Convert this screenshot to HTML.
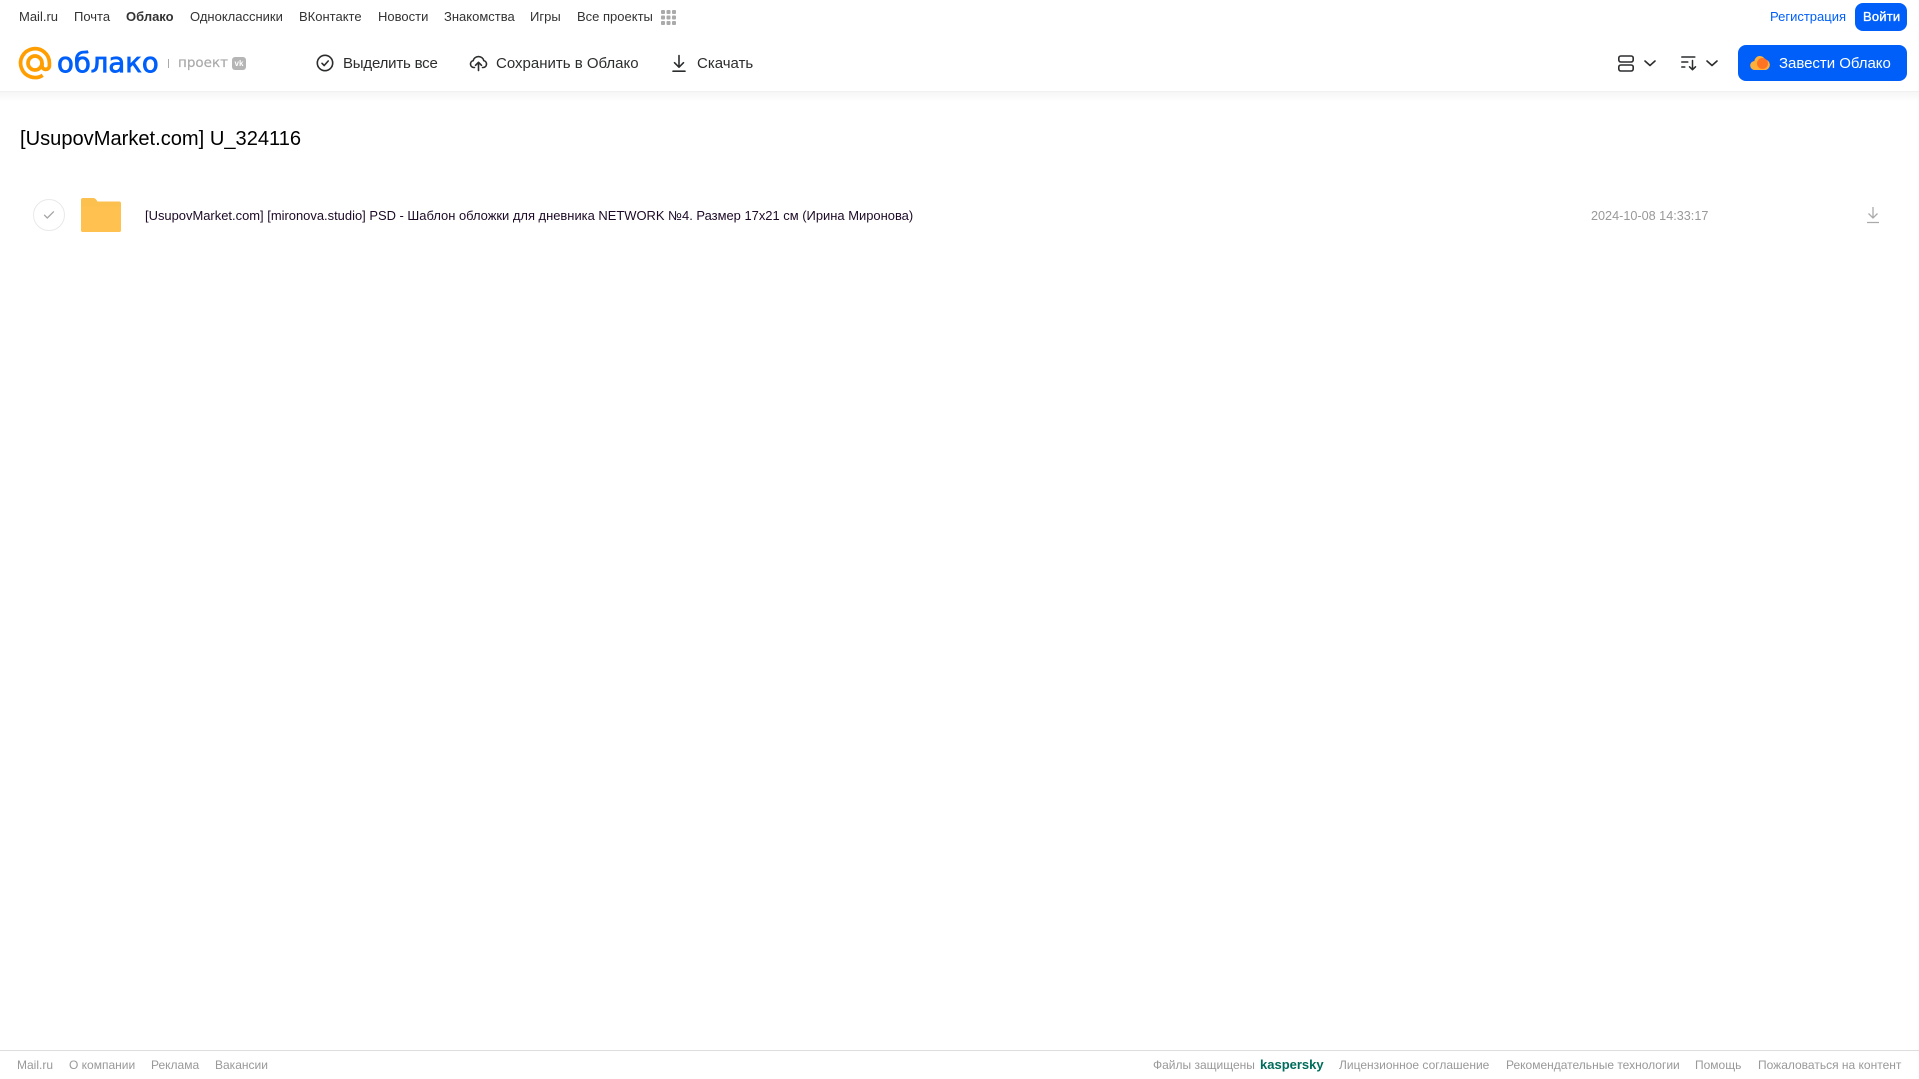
<!DOCTYPE html>
<html lang="ru"><head><meta charset="utf-8"><title>Облако</title>
<style>
html,body{margin:0;padding:0;background:#fff;width:1919px;height:1079px;overflow:hidden}
body{position:relative;font-family:"Liberation Sans",Arial,sans-serif;color:#333}
.t{position:absolute;white-space:nowrap;line-height:20px;height:20px}
.n{font-size:13px;top:7px;color:#333}
.m{font-size:15px;top:54px;color:#2c2d2e}
.f{font-size:12px;top:1055px;color:#999}
svg{position:absolute;display:block}
</style></head><body>
<span class="t n" style="left:19px">Mail.ru</span>
<span class="t n" style="left:74px">Почта</span>
<span class="t n" style="left:126px;font-weight:bold">Облако</span>
<span class="t n" style="left:190px">Одноклассники</span>
<span class="t n" style="left:299px">ВКонтакте</span>
<span class="t n" style="left:378px">Новости</span>
<span class="t n" style="left:444px">Знакомства</span>
<span class="t n" style="left:530px">Игры</span>
<span class="t n" style="left:577px">Все проекты</span>
<svg style="left:661px;top:10px" width="15" height="15" viewBox="0 0 15 15" fill="#aaa"><rect x="0" y="0" width="4" height="4" rx="1"/><rect x="5.500" y="0" width="4" height="4" rx="1"/><rect x="11" y="0" width="4" height="4" rx="1"/><rect x="0" y="5.500" width="4" height="4" rx="1"/><rect x="5.500" y="5.500" width="4" height="4" rx="1"/><rect x="11" y="5.500" width="4" height="4" rx="1"/><rect x="0" y="11" width="4" height="4" rx="1"/><rect x="5.500" y="11" width="4" height="4" rx="1"/><rect x="11" y="11" width="4" height="4" rx="1"/></svg>
<span class="t n" style="left:1770px;color:#005ff9">Регистрация</span>
<div style="position:absolute;left:1855px;top:3px;width:52px;height:28px;background:#005ff9;border-radius:8px"></div>
<span class="t n" style="left:1863px;color:#fff;-webkit-text-stroke:.35px #fff;letter-spacing:.2px">Войти</span>

<svg style="left:18px;top:46px" width="34" height="34" viewBox="0 0 33 33" fill="none" stroke="#ff9e00" stroke-width="3.600"><circle cx="16.500" cy="16.500" r="6.800"/><path d="M23.300 16.500v2.600a3.600 3.600 0 0 0 7.200 0v-2.600A14 14 0 1 0 24 28.400"/></svg>
<span class="t" style="left:57px;top:46px;height:34px;font:27.500px/34px 'DejaVu Sans',sans-serif;color:#005ff9;-webkit-text-stroke:.8px #005ff9">облако</span>
<div style="position:absolute;left:168px;top:59px;width:1px;height:9px;background:#aaa"></div>
<span class="t" style="left:178px;top:53px;font:13.500px/20px 'DejaVu Sans',sans-serif;color:#aaa;-webkit-text-stroke:.2px #aaa">проект</span>
<div style="position:absolute;left:232px;top:57px;width:14px;height:13px;background:#b5b5b5;border-radius:3px;color:#fff;font:bold 8px/13px 'Liberation Sans',sans-serif;text-align:center">vk</div>

<svg style="left:316px;top:54px" width="18" height="18" viewBox="0 0 18 18" fill="none" stroke="#2c2d2e" stroke-width="1.600" stroke-linecap="round" stroke-linejoin="round"><circle cx="9" cy="9" r="7.700"/><path d="M6 9.300l2.200 2.200L12.200 7"/></svg>
<span class="t m" style="left:343px;letter-spacing:-.2px">Выделить все</span>
<svg style="left:469px;top:53px" width="19" height="19" viewBox="0 0 19 19" fill="none" stroke="#2c2d2e" stroke-width="1.600" stroke-linecap="round" stroke-linejoin="round"><path d="M5.500 14.500H4.800a3.500 3.500 0 0 1-.6-6.900 5.500 5.500 0 0 1 10.600 0 3.500 3.500 0 0 1-.6 6.900h-.7"/><path d="M9.500 17.500V9.500M6.500 12.300l3-3 3 3"/></svg>
<span class="t m" style="left:496px">Сохранить в Облако</span>
<svg style="left:671px;top:54px" width="16" height="19" viewBox="0 0 16 19" fill="none" stroke="#2c2d2e" stroke-width="1.600" stroke-linecap="round" stroke-linejoin="round"><path d="M8 1.500v11.500M3.500 8.700L8 13.200l4.500-4.500M2 17.200h12"/></svg>
<span class="t m" style="left:697px">Скачать</span>

<svg style="left:1618px;top:55px" width="16" height="17" viewBox="0 0 16 17" fill="none" stroke="#2c2d2e" stroke-width="1.600"><rect x=".8" y="1" width="14.400" height="6" rx="2"/><rect x=".8" y="10" width="14.400" height="6" rx="2"/></svg>
<svg style="left:1644px;top:60px" width="12" height="7" viewBox="0 0 12 7" fill="none" stroke="#2c2d2e" stroke-width="1.600" stroke-linecap="round" stroke-linejoin="round"><path d="M1 1l5 4.500L11 1"/></svg>
<svg style="left:1681px;top:55px" width="17" height="16" viewBox="0 0 17 16" fill="none" stroke="#2c2d2e" stroke-width="1.500" stroke-linecap="round" stroke-linejoin="round"><path d="M.8 2h13M.8 7h6M.8 12h3M11.500 5.500v9M8.500 11.800l3 2.900 3-2.900"/></svg>
<svg style="left:1706px;top:60px" width="12" height="7" viewBox="0 0 12 7" fill="none" stroke="#2c2d2e" stroke-width="1.600" stroke-linecap="round" stroke-linejoin="round"><path d="M1 1l5 4.500L11 1"/></svg>

<div style="position:absolute;left:1738px;top:45px;width:169px;height:36px;background:#005ff9;border-radius:8px"></div>
<svg style="left:1750px;top:53px" width="20" height="18" viewBox="0 0 20 18"><path fill="#ffb03a" d="M5 17a4.500 4.500 0 0 1-.6-9A5.500 5.500 0 0 1 15 6.500a5.300 5.300 0 0 1 .5 10.500z"/><circle cx="12.500" cy="10.500" r="5.500" fill="#ff6a1f" opacity=".85"/></svg>
<span class="t m" style="left:1779px;color:#fff;letter-spacing:-.03px">Завести Облако</span>

<div style="position:absolute;left:0;top:91px;width:1919px;height:1px;background:#f0f0f0"></div>
<div style="position:absolute;left:0;top:92px;width:1919px;height:10px;background:linear-gradient(#f6f6f6,#fff)"></div>

<span class="t" style="left:20px;top:126px;font-size:20.100px;line-height:26px;height:26px;color:#000">[UsupovMarket.com] U_324116</span>

<div style="position:absolute;left:33px;top:199px;width:30px;height:30px;border:1px solid #e9e9e9;border-radius:50%"></div>
<svg style="left:43px;top:210px" width="12" height="10" viewBox="0 0 12 10" fill="none" stroke="#a5a5a5" stroke-width="1.300" stroke-linecap="round" stroke-linejoin="round"><path d="M1.500 5.200l2.800 2.800L10.500 1.800"/></svg>
<svg style="left:81px;top:198px" width="40" height="34" viewBox="0 0 40 34"><path fill="#fcc04e" d="M2 0h10c1.500 0 2.500.7 3.500 2l1 1.500H38a2 2 0 0 1 2 2V32a2 2 0 0 1-2 2H2a2 2 0 0 1-2-2V2a2 2 0 0 1 2-2z"/><path fill="#ffc14f" d="M0 8.500h40V32a2 2 0 0 1-2 2H2a2 2 0 0 1-2-2z"/></svg>
<span class="t" style="left:145px;top:206px;font-size:12.950px;color:#1c0a26">[UsupovMarket.com] [mironova.studio] PSD - Шаблон обложки для дневника NETWORK №4. Размер 17x21 см (Ирина Миронова)</span>
<span class="t" style="left:1591px;top:206px;font-size:12.650px;color:#999">2024-10-08 14:33:17</span>
<svg style="left:1866px;top:206px" width="14" height="18" viewBox="0 0 14 18" fill="none" stroke="#aaa" stroke-width="1.300"><path d="M7 1v11M2.500 7.500L7 12l4.500-4.500M1 16.500h12"/></svg>

<div style="position:absolute;left:0;top:1050px;width:1919px;height:1px;background:#dedede"></div>
<span class="t f" style="left:17px">Mail.ru</span>
<span class="t f" style="left:69px">О компании</span>
<span class="t f" style="left:151px">Реклама</span>
<span class="t f" style="left:215px">Вакансии</span>
<span class="t f" style="left:1153px">Файлы защищены</span>
<span class="t f" style="left:1260px;color:#006d5c;font-weight:bold;font-size:13px">kaspersky</span>
<span class="t f" style="left:1339px">Лицензионное соглашение</span>
<span class="t f" style="left:1506px">Рекомендательные технологии</span>
<span class="t f" style="left:1695px">Помощь</span>
<span class="t f" style="left:1758px">Пожаловаться на контент</span>
</body></html>
